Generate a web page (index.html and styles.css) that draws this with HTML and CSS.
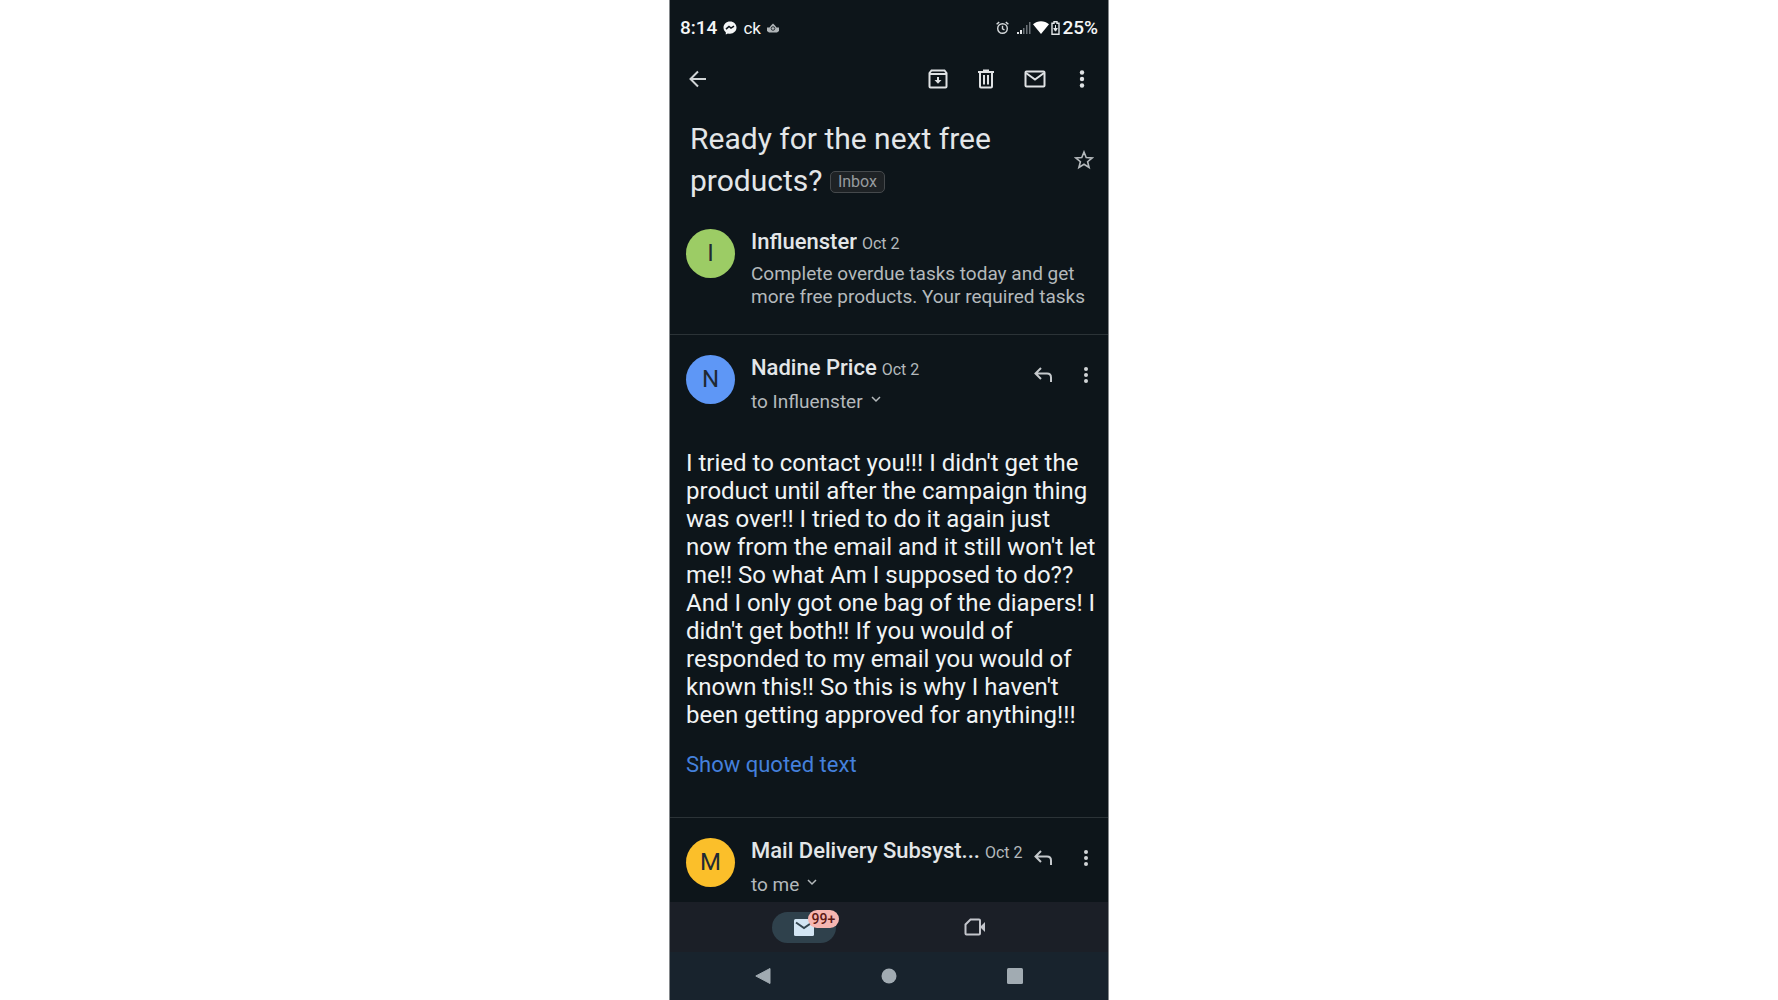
FILE: index.html
```html
<!DOCTYPE html>
<html lang="en">
<head>
    <meta charset="UTF-8">
    <meta name="viewport" content="width=device-width, initial-scale=1.0">
    <title>Ready for the next free products?</title>
    <link rel="stylesheet" href="styles.css">
</head>
<body>
    <div class="phone">
        <div class="status-bar">
            <span class="clock">8:14</span>
            <svg class="messenger" width="14" height="14" viewBox="0 0 14 14">
                <path d="M7 .5C3.200.5.5 3.200.5 6.600c0 2 .9 3.600 2.300 4.700v2.200l2.100-1.100c.7.2 1.300.3 2.100.3 3.800 0 6.500-2.700 6.500-6.100S10.800.5 7 .5z" fill="#f4f6f7"/>
                <path d="M3 8.200l3-2.700 2 1.600 3-2" fill="none" stroke="#0e151b" stroke-width="1.600"/>
            </svg>
            <span class="carrier">ck</span>
            <svg class="app-dot" width="12" height="10" viewBox="0 0 12 10">
                <path d="M0 4.500h2.500L4 2.500 6 .5l2 2 1.500 2H12v3.500L10 9.500H2L0 8z" fill="#b0b5b8"/>
                <circle cx="6" cy="5.500" r="1.800" fill="none" stroke="#2b3237"/>
            </svg>
            <div class="status-right">
                <svg class="alarm" width="13" height="14" viewBox="0 0 13 14" fill="none" stroke="#d5d9db" stroke-width="1.400">
                    <circle cx="6.500" cy="7.500" r="4.800"/>
                    <path d="M6.500 4.800v3l2 1.200M.6 3.300l2.600-2.200M12.400 3.300L9.800 1.100"/>
                </svg>
                <svg class="signal" width="14" height="13" viewBox="0 0 14 13">
                    <path d="M0 13v-2h2v2zM3 13v-4h2v4z" fill="#e3e6e8"/>
                    <path d="M6 13V7h1.500v6zM9 13V4h1.500v9zM12 13V1h1.500v12z" fill="#6c7378"/>
                </svg>
                <svg class="wifi" width="16" height="13" viewBox="0 0 16 13">
                    <path d="M8 13L0 3.200C4.500-.8 11.500-.8 16 3.200z" fill="#fff"/>
                </svg>
                <svg width="9" height="14" viewBox="0 0 9 14">
                    <path d="M3 .7h3v1.500h2v11H1v-11h2z" fill="none" stroke="#e3e6e8" stroke-width="1.400"/>
                    <path d="M4.500 4v5M2.700 7.500l1.800 2.700 1.800-2.700z" fill="#e3e6e8" stroke="#e3e6e8"/>
                </svg>
                <span class="battery">25%</span>
            </div>
        </div>

        <header class="toolbar">
            <button class="icon-button" aria-label="Back">
                <svg width="18" height="18" viewBox="0 0 18 18" fill="none" stroke="#d0d4d6" stroke-width="2">
                    <path d="M17 9H2M9 1.500L1.500 9 9 16.500"/>
                </svg>
            </button>
            <div class="toolbar-actions">
                <button class="icon-button" aria-label="Archive">
                    <svg width="20" height="20" viewBox="0 0 20 20" fill="none" stroke="#dfe2e4" stroke-width="2">
                        <path d="M1.500 4L3.500 1.500h13L18.500 4v13.500q0 1-1 1h-15q-1 0-1-1zM1.500 5h17"/>
                        <path d="M10 8v4"/>
                        <path d="M6.500 11h7L10 14.800z" fill="#dfe2e4" stroke="none"/>
                    </svg>
                </button>
                <button class="icon-button" aria-label="Delete">
                    <svg width="18" height="20" viewBox="0 0 18 20" fill="none" stroke="#dfe2e4" stroke-width="2">
                        <path d="M1 3h16M6 1.500h6M3 3v14.500q0 1 1 1h10q1 0 1-1V3M7 6v9.500M11 6v9.500"/>
                    </svg>
                </button>
                <button class="icon-button" aria-label="Mark as unread">
                    <svg width="22" height="18" viewBox="0 0 22 18" fill="none" stroke="#dfe2e4" stroke-width="2">
                        <rect x="1.500" y="1.500" width="19" height="15" rx="1"/>
                        <path d="M2 3l9 6.500L20 3"/>
                    </svg>
                </button>
                <button class="icon-button more" aria-label="More options">
                    <svg width="6" height="18" viewBox="0 0 6 18" fill="#dfe2e4">
                        <circle cx="3" cy="2.500" r="2.200"/><circle cx="3" cy="9" r="2.200"/><circle cx="3" cy="15.500" r="2.200"/>
                    </svg>
                </button>
            </div>
        </header>

        <main class="thread">
            <div class="subject">
                <h1>Ready for the next free products? <span class="label">Inbox</span></h1>
                <button class="icon-button" aria-label="Star">
                    <svg width="20" height="20" viewBox="0 0 20 20" fill="none" stroke="#b4b9bc" stroke-width="1.600">
                        <path d="M10 2l2.200 5.500 6 .4-4.600 3.800 1.500 5.800L10 14.300l-5.100 3.200 1.500-5.800L1.800 7.900l6-.4z"/>
                    </svg>
                </button>
            </div>

            <article class="message collapsed">
                <div class="avatar green">I</div>
                <div class="details">
                    <div class="from"><h2>Influenster</h2><time>Oct 2</time></div>
                    <p class="preview">Complete overdue tasks today and get more free products. Your required tasks</p>
                </div>
            </article>

            <article class="message">
                <div class="avatar blue">N</div>
                <div class="details">
                    <div class="from"><h2>Nadine Price</h2><time>Oct 2</time></div>
                    <button class="recipient">to Influenster
                        <svg width="10" height="12" viewBox="0 0 10 12" fill="none" stroke="#b4b9bc" stroke-width="1.500"><path d="M1 1l4 4 4-4"/></svg>
                    </button>
                </div>
                <div class="message-actions">
                    <button class="icon-button" aria-label="Reply">
                        <svg width="18" height="16" viewBox="0 0 18 16" fill="none" stroke="#c5c9cc" stroke-width="2">
                            <path d="M7 1L1.500 6.500 7 12M2 6.500h11q4 0 4 4V15"/>
                        </svg>
                    </button>
                    <button class="icon-button" aria-label="More">
                        <svg width="6" height="16" viewBox="0 0 6 16" fill="#d0d4d6">
                            <circle cx="3" cy="2" r="2"/><circle cx="3" cy="8" r="2"/><circle cx="3" cy="14" r="2"/>
                        </svg>
                    </button>
                </div>
            </article>
            <div class="body">
                <p>
                    I tried to contact you!!! I didn't get the<br>
                    product until after the campaign thing<br>
                    was over!! I tried to do it again just<br>
                    now from the email and it still won't let<br>
                    me!! So what Am I supposed to do??<br>
                    And I only got one bag of the diapers! I<br>
                    didn't get both!! If you would of<br>
                    responded to my email you would of<br>
                    known this!! So this is why I haven't<br>
                    been getting approved for anything!!!
                </p>
                <a href="#quoted">Show quoted text</a>
            </div>

            <article class="message">
                <div class="avatar yellow">M</div>
                <div class="details">
                    <div class="from"><h2>Mail Delivery Subsyst...</h2><time>Oct 2</time></div>
                    <button class="recipient">to me
                        <svg width="10" height="12" viewBox="0 0 10 12" fill="none" stroke="#b4b9bc" stroke-width="1.500"><path d="M1 1l4 4 4-4"/></svg>
                    </button>
                </div>
                <div class="message-actions">
                    <button class="icon-button" aria-label="Reply">
                        <svg width="18" height="16" viewBox="0 0 18 16" fill="none" stroke="#c5c9cc" stroke-width="2">
                            <path d="M7 1L1.500 6.500 7 12M2 6.500h11q4 0 4 4V15"/>
                        </svg>
                    </button>
                    <button class="icon-button" aria-label="More">
                        <svg width="6" height="16" viewBox="0 0 6 16" fill="#d0d4d6">
                            <circle cx="3" cy="2" r="2"/><circle cx="3" cy="8" r="2"/><circle cx="3" cy="14" r="2"/>
                        </svg>
                    </button>
                </div>
            </article>
        </main>

        <nav class="tabs">
            <button class="tab" aria-label="Mail">
                <span class="pill">
                    <svg width="20" height="17" viewBox="0 0 20 17">
                        <rect width="20" height="17" rx="1.500" fill="#d3e5f3"/>
                        <path d="M2 3.500l8 5.500 8-5.500" fill="none" stroke="#34454f" stroke-width="2"/>
                    </svg>
                    <span class="badge">99+</span>
                </span>
            </button>
            <button class="tab" aria-label="Meet">
                <svg width="22" height="18" viewBox="0 0 22 18">
                    <path d="M6.500 1.500H15q1 0 1 1v13q0 1-1 1H2.500q-1 0-1-1V6.500z" fill="none" stroke="#c3c5cb" stroke-width="2"/>
                    <path d="M16 9l5-5v10z" fill="#c3c5cb"/>
                </svg>
            </button>
        </nav>

        <nav class="system-nav">
            <button class="icon-button" aria-label="System back">
                <svg width="16" height="16" viewBox="0 0 16 16"><path d="M15 .5v15L.8 8z" fill="#a1abb2" stroke="#a1abb2" stroke-linejoin="round"/></svg>
            </button>
            <button class="icon-button" aria-label="Home">
                <svg width="16" height="16" viewBox="0 0 16 16"><circle cx="8" cy="8" r="7.500" fill="#a1abb2"/></svg>
            </button>
            <button class="icon-button" aria-label="Recent apps">
                <svg width="16" height="16" viewBox="0 0 16 16"><rect width="16" height="16" rx="1.500" fill="#a1abb2"/></svg>
            </button>
        </nav>
    </div>
</body>
</html>
```
FILE: styles.css
```css
* {
    box-sizing: border-box;
}

body {
    margin: 0;
    background: #fff;
    font-family: Roboto, sans-serif;
    color: #e3e6e8;
}

h1, h2, p {
    margin: 0;
}

button {
    padding: 0;
    border: none;
    background: none;
    color: inherit;
    font: inherit;
    cursor: pointer;
}

svg {
    display: block;
    flex: none;
}

.phone {
    display: flex;
    flex-direction: column;
    max-width: 440px;
    height: 100vh;
    margin: 0 auto;
    border: solid #85898c;
    border-width: 0 1px;
    background: #0d151a;
}

.status-bar {
    display: flex;
    align-items: center;
    gap: 6px;
    height: 55px;
    padding: 0 10px;
    color: #f4f6f7;
}

.clock,
.battery {
    font-size: 19px;
    font-weight: 500;
}

.carrier {
    font-size: 17px;
}

.status-right {
    display: flex;
    align-items: center;
    gap: 2px;
    margin-left: auto;
}

.alarm {
    margin-right: 6px;
}

.icon-button {
    display: flex;
    align-items: center;
    justify-content: center;
}

.toolbar {
    display: flex;
    align-items: center;
    justify-content: space-between;
    height: 48px;
    padding: 0 23px 0 19px;
}

.toolbar-actions {
    display: flex;
    align-items: center;
    gap: 29px;
}

.more {
    margin-left: 4px;
}

.thread {
    flex: 1;
    min-height: 0;
    overflow: hidden;
}

.subject {
    display: flex;
    align-items: center;
    justify-content: space-between;
    padding: 15px 14px 15px 20px;
}

h1 {
    max-width: 330px;
    font-size: 30px;
    font-weight: 400;
    line-height: 42px;
}

.label {
    display: inline-block;
    padding: 0 7px;
    border: 1px solid #45494c;
    border-radius: 5px;
    background: #1e2225;
    color: #979b9e;
    font-size: 16px;
    line-height: 20px;
    vertical-align: 4px;
}

.message {
    display: flex;
    padding: 20px 16px 0;
    border-top: 1px solid #2b3337;
}

.collapsed {
    padding: 12px 16px 26px;
    border-top: none;
}

.avatar {
    flex: none;
    width: 49px;
    height: 49px;
    margin-right: 16px;
    border-radius: 50%;
    color: #1f2a33;
    font-size: 24px;
    line-height: 49px;
    text-align: center;
}

.green {
    background: #9ccc65;
}

.blue {
    background: #5e97f6;
}

.yellow {
    background: #fbbf2a;
}

.details {
    flex: 1;
    min-width: 0;
}

.from {
    display: flex;
    align-items: baseline;
    gap: 5px;
    line-height: 26px;
}

h2 {
    overflow: hidden;
    font-size: 22px;
    font-weight: 500;
    text-overflow: ellipsis;
    white-space: nowrap;
}

time {
    flex: none;
    color: #b4b9bc;
    font-size: 16px;
}

.preview {
    margin-top: 5px;
    color: #b4b9bc;
    font-size: 19px;
    line-height: 23px;
}

.recipient {
    display: flex;
    align-items: center;
    gap: 8px;
    margin-top: 6px;
    color: #b4b9bc;
    font-size: 19px;
    line-height: 26px;
}

.message-actions {
    display: flex;
    align-items: center;
    gap: 31px;
    height: 40px;
    padding: 0 3px 0 8px;
}

.body {
    padding: 34px 8px 38px 16px;
    font-size: 22px;
    line-height: 28px;
}

.body p {
    margin-bottom: 22px;
    color: #f0f3f4;
    font-size: 24px;
}

.body a {
    color: #4480dc;
    text-decoration: none;
}

.tabs {
    display: grid;
    grid-template-columns: 1fr 1fr;
    height: 50px;
    padding: 0 48px;
    background: #1b1f27;
}

.tab {
    display: flex;
    align-items: center;
    justify-content: center;
}

.pill {
    display: flex;
    position: relative;
    align-items: center;
    justify-content: center;
    width: 64px;
    height: 31px;
    border-radius: 16px;
    background: #2f414c;
}

.badge {
    position: absolute;
    top: -2px;
    left: 36px;
    padding: 0 4px;
    border-radius: 9px;
    background: #f6b5b0;
    color: #5c1815;
    font-size: 14px;
    font-weight: 500;
    line-height: 18px;
}

.system-nav {
    display: flex;
    align-items: center;
    justify-content: space-between;
    height: 48px;
    padding: 0 85px;
    background: #18232d;
}
```
